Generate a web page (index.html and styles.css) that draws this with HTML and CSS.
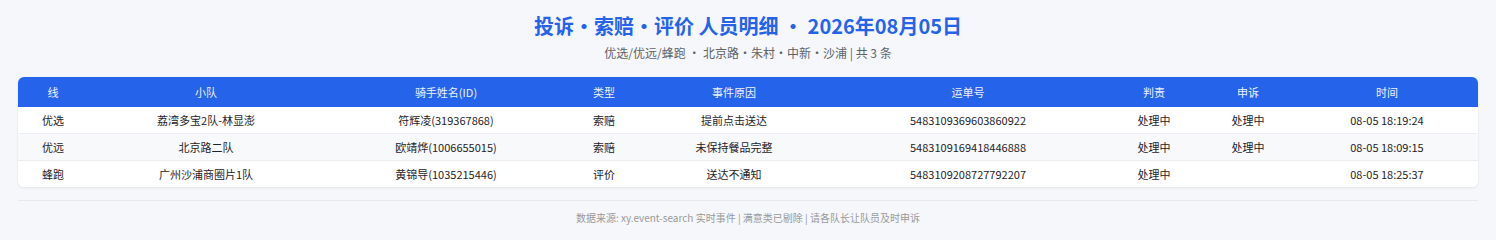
FILE: index.html
```html
<!DOCTYPE html>
<html lang="zh">
<head>
<meta charset="utf-8">
<link rel="stylesheet" href="styles.css">
</head>
<body>
<div class="page">
  <h1 class="title">投诉•索赔•评价 人员明细 • 2026年08月05日</h1>
  <div class="sub">优选/优远/蜂跑 • 北京路•朱村•中新•沙浦 | 共 3 条</div>
  <div class="card">
    <table class="grid">
      <colgroup>
        <col class="c1"><col class="c2"><col class="c3"><col class="c4"><col class="c5"><col class="c6"><col class="c7"><col class="c8"><col class="c9">
      </colgroup>
      <thead>
        <tr><th>线</th><th>小队</th><th>骑手姓名(ID)</th><th>类型</th><th>事件原因</th><th>运单号</th><th>判责</th><th>申诉</th><th>时间</th></tr>
      </thead>
      <tbody>
        <tr><td>优选</td><td>荔湾多宝2队-林显澎</td><td>符辉凌(319367868)</td><td>索赔</td><td>提前点击送达</td><td>5483109369603860922</td><td>处理中</td><td>处理中</td><td>08-05 18:19:24</td></tr>
        <tr><td>优远</td><td>北京路二队</td><td>欧靖烨(1006655015)</td><td>索赔</td><td>未保持餐品完整</td><td>5483109169418446888</td><td>处理中</td><td>处理中</td><td>08-05 18:09:15</td></tr>
        <tr><td>蜂跑</td><td>广州沙浦商圈片1队</td><td>黄锦导(1035215446)</td><td>评价</td><td>送达不通知</td><td>5483109208727792207</td><td>处理中</td><td></td><td>08-05 18:25:37</td></tr>
      </tbody>
    </table>
  </div>
  <div class="foot">数据来源: xy.event-search 实时事件 | 满意类已剔除 | 请各队长让队员及时申诉</div>
</div>
</body>
</html>
```

FILE: styles.css
```css
html, body {
  margin: 0;
  padding: 0;
  background: #f5f7fb;
}
body {
  font-family: "Noto Sans CJK SC", "Noto Sans", sans-serif;
  color: #1f2328;
}
.page {
  padding: 10px 18px 0;
}
.title {
  margin: 0;
  text-align: center;
  font-size: 20px;
  line-height: 32px;
  font-weight: 700;
  color: #2563eb;
}
.sub {
  text-align: center;
  font-size: 12px;
  line-height: 18px;
  color: #5f6368;
  margin-top: 2px;
}
.card {
  margin-top: 15px;
  background: #fff;
  border-radius: 6px;
  overflow: hidden;
  box-shadow: 0 1px 3px rgba(0, 0, 0, 0.08);
}
.grid {
  width: 100%;
  border-collapse: collapse;
  table-layout: fixed;
  font-size: 11px;
}
.c1 { width: 70px; }
.c2 { width: 236px; }
.c3 { width: 244px; }
.c4 { width: 72px; }
.c5 { width: 188px; }
.c6 { width: 280px; }
.c7 { width: 92px; }
.c8 { width: 96px; }
.c9 { width: auto; }
.grid th {
  background: #2563eb;
  color: #eef2fd;
  font-weight: 400;
  height: 30px;
  padding: 0;
  text-align: center;
}
.grid td {
  height: 26px;
  padding: 0;
  text-align: center;
  border-top: 1px solid #eceef2;
}
.grid tbody tr:first-child td {
  border-top: none;
  height: 26px;
}
.grid tbody tr:nth-child(even) td {
  background: #f8f9fb;
}
.foot {
  margin-top: 13px;
  border-top: 1px solid #e6e8ec;
  padding-top: 9px;
  text-align: center;
  font-size: 10px;
  line-height: 16px;
  color: #999;
}
```
